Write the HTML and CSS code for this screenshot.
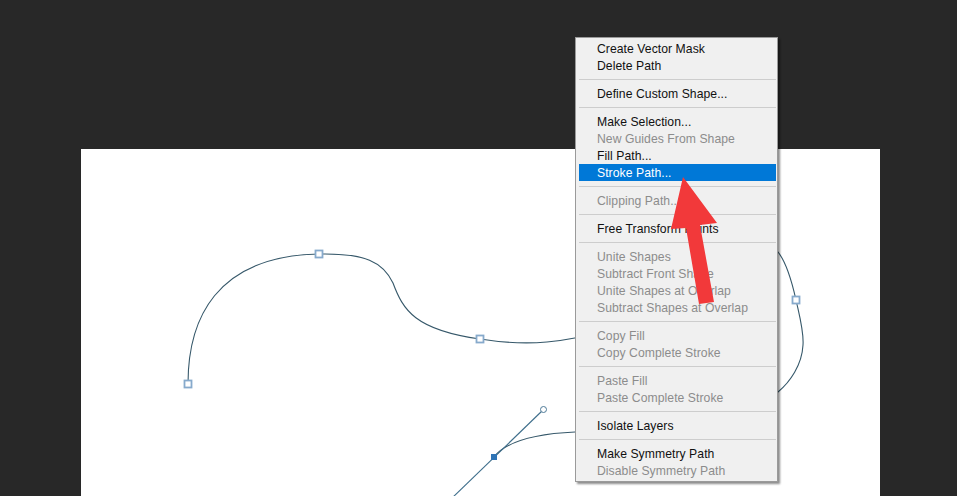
FILE: index.html
```html
<!DOCTYPE html>
<html lang="en">
<head>
<meta charset="utf-8">
<title>Path context menu</title>
<link rel="stylesheet" href="styles.css">
</head>
<body>
<div class="workspace">
  <div class="canvas">
    <svg class="paths" viewBox="81 149 799 347" width="799" height="347">
      <path class="curve" d="M188,384 C188,320 215,256 319,254 C365,253 383,262 393,283 C403,310 415,330 480,339 C530,347 565,342 610,330 C690,300 750,235 778,252 C786,262 792,282 796,300 C800,318 804,332 803,345 C802,365 790,382 778,392 C700,440 620,430 575,432 C530,434 505,443 494,457"/>
      <line class="handle" x1="543" y1="410" x2="450" y2="500"/>
      <rect class="anchor" x="184.5" y="380.5" width="7" height="7"/>
      <rect class="anchor" x="315.5" y="250.5" width="7" height="7"/>
      <rect class="anchor" x="476.5" y="335.5" width="7" height="7"/>
      <rect class="anchor" x="792.5" y="296.5" width="7" height="7"/>
      <rect class="anchor-on" x="491" y="454" width="6" height="6"/>
      <circle class="handle-end" cx="543.5" cy="409.5" r="3"/>
    </svg>
  </div>
</div>

<div class="menu">
  <div class="item">Create Vector Mask</div>
  <div class="item">Delete Path</div>
  <div class="sep"></div>
  <div class="item">Define Custom Shape...</div>
  <div class="sep"></div>
  <div class="item">Make Selection...</div>
  <div class="item off">New Guides From Shape</div>
  <div class="item">Fill Path...</div>
  <div class="item active">Stroke Path...</div>
  <div class="sep"></div>
  <div class="item off">Clipping Path...</div>
  <div class="sep"></div>
  <div class="item">Free Transform Points</div>
  <div class="sep"></div>
  <div class="item off">Unite Shapes</div>
  <div class="item off">Subtract Front Shape</div>
  <div class="item off">Unite Shapes at Overlap</div>
  <div class="item off">Subtract Shapes at Overlap</div>
  <div class="sep"></div>
  <div class="item off">Copy Fill</div>
  <div class="item off">Copy Complete Stroke</div>
  <div class="sep"></div>
  <div class="item off">Paste Fill</div>
  <div class="item off">Paste Complete Stroke</div>
  <div class="sep"></div>
  <div class="item">Isolate Layers</div>
  <div class="sep"></div>
  <div class="item">Make Symmetry Path</div>
  <div class="item off">Disable Symmetry Path</div>
</div>

<svg class="arrow" viewBox="0 0 957 496" width="957" height="496">
  <polygon class="arrow-shape" points="683,177 717,223 700,225 714,302 699,304 686,228 671,229"/>
</svg>
</body>
</html>
```

FILE: styles.css
```css
html, body {
  margin: 0;
  padding: 0;
}

body {
  width: 957px;
  height: 496px;
  overflow: hidden;
  background: #282828;
  position: relative;
  font-family: "Liberation Sans", Arial, sans-serif;
}

.workspace {
  padding: 149px 0 0 81px;
}

.canvas {
  width: 799px;
  height: 347px;
  background: #ffffff;
}

.paths {
  display: block;
}

.curve {
  fill: none;
  stroke: #36586a;
  stroke-width: 1.1;
}

.handle {
  stroke: #3f6f8c;
  stroke-width: 1.1;
}

.anchor {
  fill: #ffffff;
  stroke: #87aacc;
  stroke-width: 1.8;
}

.anchor-on {
  fill: #2f74b5;
}

.handle-end {
  fill: #ffffff;
  stroke: #4e7a98;
  stroke-width: 1;
}

.menu {
  position: absolute;
  left: 575px;
  top: 37px;
  width: 197px;
  padding: 2px 1px 2px 3px;
  background: #f0f0f0;
  border: 1px solid #9a9a9a;
  box-shadow: 2px 2px 2px rgba(0, 0, 0, 0.45);
}

.item {
  height: 16px;
  padding-top: 1px;
  line-height: 17px;
  padding-left: 18px;
  font-size: 12.2px;
  letter-spacing: 0.05px;
  color: #111111;
  white-space: nowrap;
}

.item.off {
  color: #8c8c8c;
}

.item.active {
  background: #0078d7;
  color: #ffffff;
}

.sep {
  height: 1px;
  margin: 5px 0;
  background: #cdcdcd;
}

.arrow {
  position: absolute;
  left: 0;
  top: 0;
  pointer-events: none;
}

.arrow-shape {
  fill: #f2393a;
}
```
